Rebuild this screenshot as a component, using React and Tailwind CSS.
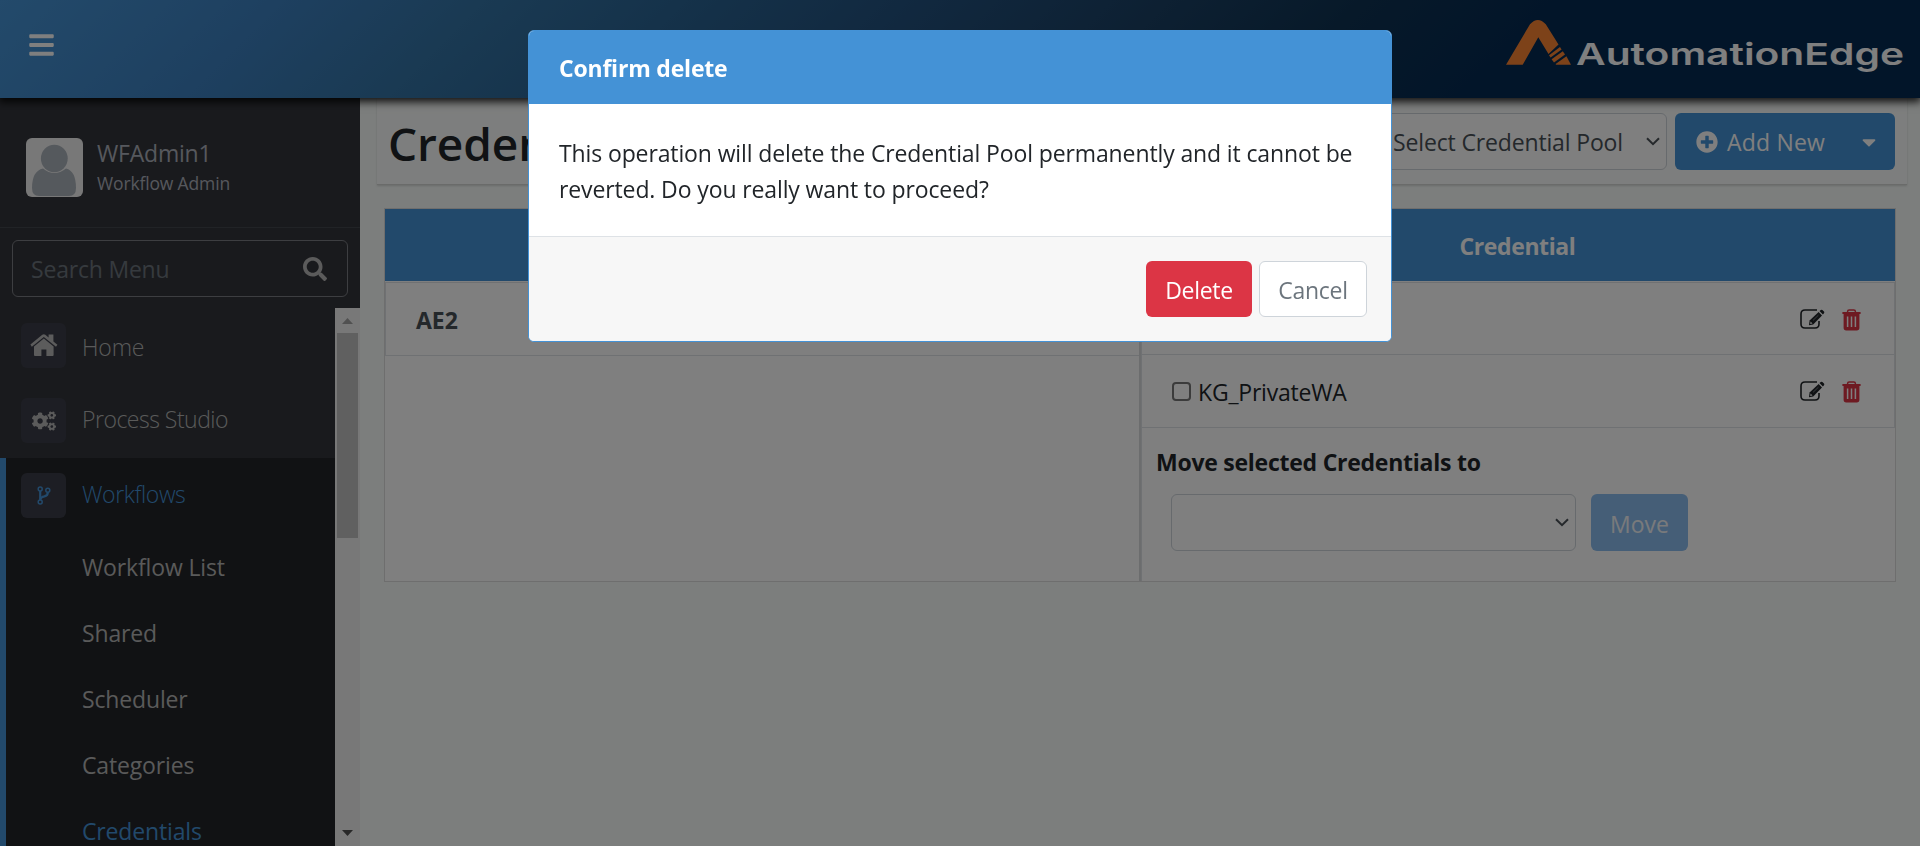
import { FaBars, FaCaretDown, FaCogs, FaPlusCircle, FaSearch } from "react-icons/fa";

const SUB_ITEMS = ["Workflow List", "Shared", "Scheduler", "Categories", "Credentials"];

function Chevron() {
  return (
    <svg width="14" height="9" viewBox="0 0 14 9" fill="none" stroke="#4a5157" strokeWidth="2">
      <path d="M1 1.2 7 7.2 13 1.2" />
    </svg>
  );
}

function HomeIcon() {
  return (
    <svg className="-mt-[1px]" width="28" height="22" viewBox="0 0 28 22" fill="#b8b8b8">
      <path d="M.4 10.6 12.3.8Q13.8-.3 15.3.8L18.6 3.5V.4H23.4V7.4L27.4 10.8 26 12.7 13.8 2.9 1.8 12.7z" />
      <path d="M13.8 4.6 23.6 12.5V21q0 1-1 1H16.4V15.6H11.4V22H5Q4 22 4 21V12.5z" />
    </svg>
  );
}

function BranchIcon() {
  return (
    <svg width="14" height="19" viewBox="0 0 14 19" fill="none" stroke="#4492d6" strokeWidth="1.5">
      <circle cx="3.2" cy="3" r="2" />
      <circle cx="3.2" cy="16" r="2" />
      <circle cx="10.8" cy="4.2" r="2" />
      <path d="M3.2 5v9" strokeWidth="2.2" />
      <path d="M10.8 6.2Q11 9.4 7.4 10.4 3.8 11.2 3.4 13.4" strokeWidth="2.2" />
    </svg>
  );
}

function EditIcon() {
  return (
    <svg width="25" height="20" viewBox="0 0 25 20">
      <path
        d="M17 1H5Q1 1 1 5v10q0 4 4 4h10q4 0 4-4v-3"
        fill="none"
        stroke="#212529"
        strokeWidth="1.6"
      />
      <path d="M9 16.2 9.6 11.6 18.6 3 22 6.4 13.2 15.4z" fill="#212529" />
      <path d="M19.5 2.1 20.8 1Q21.6.3 22.4 1L24 2.6Q24.7 3.4 24 4.2L22.9 5.4z" fill="#212529" />
      <path d="M10.6 12.6 12.5 14.4 10.2 15z" fill="#fff" />
      <path d="M13 11.4 18.4 6.2" stroke="#8a8f94" strokeWidth="0.8" />
    </svg>
  );
}

function TrashIcon() {
  return (
    <svg width="19" height="22" viewBox="0 0 19 22" fill="#dc3545">
      <path
        d="M5.6 3.6V2.6Q5.6.9 7.2.9H11.8Q13.4.9 13.4 2.6V3.6"
        fill="none"
        stroke="#dc3545"
        strokeWidth="1.5"
      />
      <path d="M.4 3.1H18.6V5H17.4V18.8Q17.4 21.4 14.8 21.4H4.2Q1.6 21.4 1.6 18.8V5H.4z" />
      <path d="M5.6 7.6V18M9.5 7.6V18M13.4 7.6V18" stroke="#fff" strokeWidth="1.5" />
    </svg>
  );
}

function Logo() {
  return (
    <svg width="402" height="60" viewBox="0 0 402 60">
      <g fill="#fa8433">
        <path d="M0 45.7 24 5.2Q31.8 -3.4 39.8 5.2L52.5 25.6 42.5 35 32.3 18.3 16.7 45.7z" />
        <path d="M43 36.2 54 28 55.6 30.6 44.6 38.5z" />
        <path d="M45.6 40.2 56.8 32.2 59 35.6 48 43.6z" />
        <path d="M49.6 45 60.4 37.2 65 45.7H50z" />
      </g>
      <text
        x="70"
        y="46"
        textLength="328"
        lengthAdjust="spacingAndGlyphs"
        fill="#fff"
        fontSize="30"
        fontWeight="600"
        fontFamily="Inter, sans-serif"
      >
        AutomationEdge
      </text>
    </svg>
  );
}

function Header() {
  return (
    <header className="relative z-10 flex h-[98px] shrink-0 justify-between bg-[linear-gradient(135deg,#4694d6_0%,#3c80c0_14%,#3474a6_24%,#2a6494_34%,#235280_45%,#1a4064_58%,#0e3252_68%,#042a52_78%,#042a52_100%)] pl-[29px] pr-[12px] shadow-[0_3px_8px_1px_rgba(0,0,0,0.85)]">
      <FaBars className="mt-[31px] h-[28px] w-[25px] text-white" />
      <div className="mt-[19px]">
        <Logo />
      </div>
    </header>
  );
}

function MenuIcon({ children }) {
  return (
    <span className="flex size-[45px] shrink-0 items-center justify-center rounded-md bg-[#3b3d48]">
      {children}
    </span>
  );
}

function Sidebar() {
  return (
    <aside className="flex w-[360px] shrink-0 flex-col bg-[#33353b]">
      <div className="flex h-[130px] shrink-0 border-b border-[#43474d] pl-[26px] pt-[40px]">
        <div className="h-[59px] w-[57px] overflow-hidden rounded-md bg-[#f1f1f1]">
          <svg width="57" height="59" viewBox="0 0 57 59" fill="#abb2ba">
            <ellipse cx="28.3" cy="20.5" rx="13.4" ry="13.7" />
            <path d="M17 30.5Q28.3 39.5 40 30.5 50 33 50 50 50 58 43 58H13Q6 58 6 50 6 33 17 30.5z" />
          </svg>
        </div>
        <div className="ml-[14px] flex flex-col text-[#adb0bb]">
          <span className="h-[33px] text-[23px] leading-[30px] tracking-[-0.2px]">WFAdmin1</span>
          <span className="text-[17.5px] leading-[24px] tracking-[-0.15px]">Workflow Admin</span>
        </div>
      </div>
      <div className="mx-[12px] mt-[12px] flex h-[57px] shrink-0 items-center justify-between rounded-md border border-[#7a7c82] pl-[18px] pr-[20px]">
        <span className="pt-[2px] text-[23px] tracking-[-0.2px] text-[#6c757d]">Search Menu</span>
        <FaSearch className="size-[24px] text-[#b6b6b6]" />
      </div>
      <div className="mt-[11px] flex min-h-0 flex-1">
        <nav className="min-w-0 flex-1 overflow-hidden">
          <div className="flex h-[75px] items-center pl-[21px]">
            <MenuIcon>
              <HomeIcon />
            </MenuIcon>
            <span className="ml-[16px] pt-[3px] text-[23px] font-light tracking-[-0.2px] text-[#b4b4b4]">
              Home
            </span>
          </div>
          <div className="flex h-[75px] items-center pl-[21px]">
            <MenuIcon>
              <FaCogs className="size-[24px] text-[#b6b6b6]" />
            </MenuIcon>
            <span className="ml-[16px] pb-[3px] text-[23px] font-light tracking-[-0.5px] text-[#b4b4b4]">
              Process Studio
            </span>
          </div>
          <div className="border-l-[6px] border-[#4492d6] bg-[#222428]">
            <div className="flex h-[75px] items-center pl-[15px]">
              <MenuIcon>
                <BranchIcon />
              </MenuIcon>
              <span className="ml-[16px] pb-[3px] text-[23px] font-light tracking-[-0.4px] text-[#4492d6]">
                Workflows
              </span>
            </div>
            {SUB_ITEMS.map((item) => (
              <div
                key={item}
                className={
                  "flex h-[66px] items-center pl-[76px] pt-[2px] text-[23px] tracking-[-0.15px] " +
                  (item === "Credentials" ? "text-[#4492d6]" : "text-[#b4b4b4]")
                }
              >
                {item}
              </div>
            ))}
          </div>
        </nav>
        <div className="flex w-[25px] shrink-0 flex-col items-center bg-[#f1f1f1]">
          <svg className="mt-[10px]" width="11" height="6" viewBox="0 0 11 6" fill="#a3a3a3">
            <path d="M0 6 5.5 0 11 6z" />
          </svg>
          <div className="mt-[9px] h-[205px] w-[21px] bg-[#c1c1c1]" />
          <svg className="mb-[10px] mt-auto" width="11" height="6" viewBox="0 0 11 6" fill="#505050">
            <path d="M0 0 5.5 6 11 0z" />
          </svg>
        </div>
      </div>
    </aside>
  );
}

function TitleBar() {
  return (
    <div className="ml-[17px] mr-[13px] flex h-[87px] shrink-0 justify-between border-b border-[#d4d6d5] bg-[#fbfdfc] pl-[11px] pr-[12px] pt-[15px] shadow-[0_1px_2px_rgba(0,0,0,0.15)]">
      <h1 className="text-[46px] font-[550] leading-[60px] tracking-[-0.1px] text-[#212529]">
        Credentials
      </h1>
      <div className="flex gap-[8px]">
        <div className="flex h-[57px] w-[300px] items-center justify-between rounded-md border border-[#ced4da] bg-white pl-[25px] pr-[6px]">
          <span className="pt-[2px] text-[23px] tracking-[-0.15px] text-[#495057]">
            Select Credential Pool
          </span>
          <Chevron />
        </div>
        <div className="flex h-[57px] w-[220px] items-center rounded-md bg-[#4492d6] pl-[21px] pr-[15px] text-white">
          <FaPlusCircle className="size-[22px]" />
          <span className="ml-[9px] pt-[2px] text-[23px] tracking-[0.2px]">Add New</span>
          <FaCaretDown className="ml-auto size-[22px]" />
        </div>
      </div>
    </div>
  );
}

function CredentialRow({ name, last }) {
  return (
    <div
      className={
        "flex items-center border-b border-[#dee2e6] pl-[30px] pr-[33px] " + (last ? "h-[73px]" : "h-[72px]")
      }
    >
      <span className="size-[19px] rounded-[4px] border-2 border-[#767676] bg-white" />
      <span className="ml-[7px] pt-[2px] text-[23px] tracking-[-0.2px] text-[#212529]">{name}</span>
      <span className="ml-auto">
        <EditIcon />
      </span>
      <span className="ml-[17px] pt-[2px]">
        <TrashIcon />
      </span>
    </div>
  );
}

function PoolTable() {
  return (
    <div className="mx-[24px] mt-[23px] h-[374px] shrink-0 border border-[#dcdddd] bg-white">
      <div className="grid h-[73px] grid-cols-2 border-b border-white bg-[#4492d6] text-center text-[23px] font-bold leading-[75px] tracking-[-0.4px] text-white">
        <div>Credential Pool</div>
        <div>Credential</div>
      </div>
      <div className="flex h-[299px] border-t border-[#dee2e6]">
        <div className="w-[756px] border-r-2 border-[#d8dadc]">
          <div className="flex h-[73px] items-center border-b border-l border-[#dee2e6] pl-[30px] pt-[2px] text-[23px] font-bold text-[#495057]">
            AE2
          </div>
        </div>
        <div className="flex-1 border-l border-[#dee2e6]">
          <div className="border-r border-[#dee2e6]">
            <CredentialRow name="Default" />
            <CredentialRow name="KG_PrivateWA" last />
          </div>
          <p className="pl-[14px] pt-[17px] text-[23px] font-bold leading-[34px] tracking-[-0.25px] text-[#212529]">
            Move selected Credentials to
          </p>
          <div className="flex gap-[15px] pl-[29px] pt-[15px]">
            <div className="flex h-[57px] w-[405px] items-center justify-end rounded-md border border-[#ced4da] bg-white pr-[6px]">
              <Chevron />
            </div>
            <div className="flex h-[57px] w-[97px] items-center justify-center rounded-md bg-[#8abcee] pt-[4px] text-[23px] text-[#f2f5f8]">
              Move
            </div>
          </div>
        </div>
      </div>
    </div>
  );
}

function ConfirmDialog() {
  return (
    <div className="fixed inset-0 z-20 bg-black/50 pt-[30px]">
      <div className="ml-[528px] flex h-[312px] w-[864px] flex-col overflow-hidden rounded-md border border-[#4492d6] bg-white">
        <div className="h-[73px] bg-[#4492d6] pl-[30px] text-[23px] font-bold leading-[75px] tracking-[-0.2px] text-white">
          Confirm delete
        </div>
        <div className="h-[132px] pl-[30px] pt-[31px] text-[23px] leading-[36px] tracking-[-0.12px] text-[#212529]">
          <p>This operation will delete the Credential Pool permanently and it cannot be</p>
          <p>reverted. Do you really want to proceed?</p>
        </div>
        <div className="flex flex-1 justify-end gap-[7px] border-t border-[#dee2e6] bg-[#f7f7f7] pr-[24px] pt-[24px] text-[23px] tracking-[-0.3px]">
          <button className="h-[56px] w-[106px] rounded-md bg-[#dc3545] pt-[3px] text-white">Delete</button>
          <button className="h-[56px] w-[108px] rounded-md border border-[#ced4da] bg-white pt-[3px] text-[#6c757d]">
            Cancel
          </button>
        </div>
      </div>
    </div>
  );
}

export default function App() {
  return (
    <div className="flex h-[846px] w-[1920px] flex-col overflow-hidden bg-[#f8fcfa] font-['Open_Sans',sans-serif]">
      <Header />
      <div className="flex min-h-0 flex-1">
        <Sidebar />
        <main className="flex min-w-0 flex-1 flex-col">
          <TitleBar />
          <PoolTable />
        </main>
      </div>
      <ConfirmDialog />
    </div>
  );
}
